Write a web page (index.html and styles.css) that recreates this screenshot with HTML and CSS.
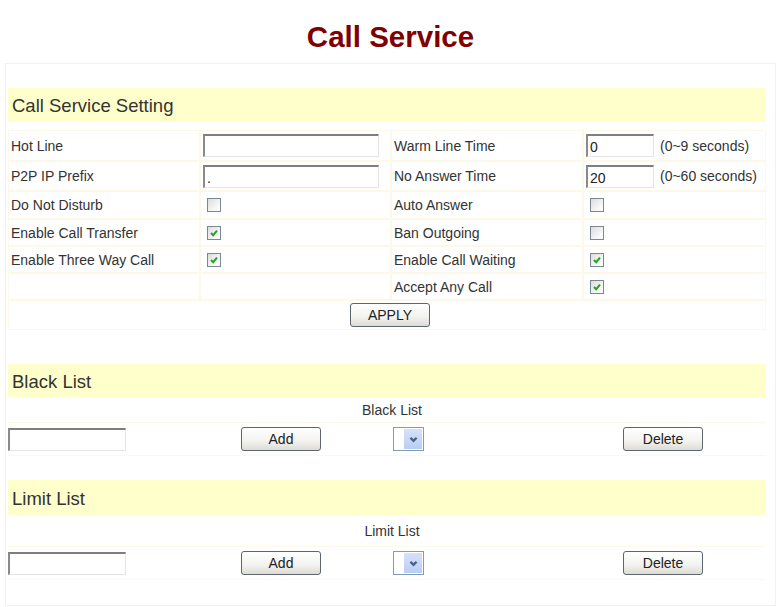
FILE: index.html
```html
<!DOCTYPE html>
<html lang="en">
<head>
  <meta charset="UTF-8" />
  <title>Call Service</title>
  <link rel="stylesheet" href="styles.css">
</head>
<body>

  <h1 class="page-title">Call Service</h1>

  <div class="panel">

    <div class="band">Call Service Setting</div>

    <div class="form-grid">
      <div class="cell row-1">Hot Line</div>
      <div class="cell row-1"><span class="textbox wide"></span></div>
      <div class="cell row-1">Warm Line Time</div>
      <div class="cell row-1"><span class="textbox short">0</span><span class="hint">(0~9 seconds)</span></div>

      <div class="cell row-2">P2P IP Prefix</div>
      <div class="cell row-2"><span class="textbox wide">.</span></div>
      <div class="cell row-2">No Answer Time</div>
      <div class="cell row-2"><span class="textbox short">20</span><span class="hint">(0~60 seconds)</span></div>

      <div class="cell row-3">Do Not Disturb</div>
      <div class="cell row-3"><span class="check"></span></div>
      <div class="cell row-3">Auto Answer</div>
      <div class="cell row-3"><span class="check"></span></div>

      <div class="cell row-4">Enable Call Transfer</div>
      <div class="cell row-4"><span class="check on"><svg viewBox="0 0 10 10"><polyline points="2,5 4.2,7.2 8,2.6" /></svg></span></div>
      <div class="cell row-4">Ban Outgoing</div>
      <div class="cell row-4"><span class="check"></span></div>

      <div class="cell row-5">Enable Three Way Call</div>
      <div class="cell row-5"><span class="check on"><svg viewBox="0 0 10 10"><polyline points="2,5 4.2,7.2 8,2.6" /></svg></span></div>
      <div class="cell row-5">Enable Call Waiting</div>
      <div class="cell row-5"><span class="check on"><svg viewBox="0 0 10 10"><polyline points="2,5 4.2,7.2 8,2.6" /></svg></span></div>

      <div class="cell row-6"></div>
      <div class="cell row-6"></div>
      <div class="cell row-6">Accept Any Call</div>
      <div class="cell row-6"><span class="check on"><svg viewBox="0 0 10 10"><polyline points="2,5 4.2,7.2 8,2.6" /></svg></span></div>

      <div class="cell apply-row"><span class="btn">APPLY</span></div>
    </div>

    <div class="band band-black">Black List</div>
    <div class="list-label black-label">Black List</div>
    <div class="list-row black-row">
      <span class="textbox list-input"></span>
      <span class="btn">Add</span>
      <span class="dropdown"><span class="dropdown-arrow"><svg viewBox="0 0 10 10"><polyline points="2.2,3.4 5,6.2 7.8,3.4" /></svg></span></span>
      <span class="btn">Delete</span>
    </div>

    <div class="band band-limit">Limit List</div>
    <div class="list-label limit-label">Limit List</div>
    <div class="list-row limit-row">
      <span class="textbox list-input"></span>
      <span class="btn">Add</span>
      <span class="dropdown"><span class="dropdown-arrow"><svg viewBox="0 0 10 10"><polyline points="2.2,3.4 5,6.2 7.8,3.4" /></svg></span></span>
      <span class="btn">Delete</span>
    </div>

  </div>

</body>
</html>
```

FILE: styles.css
```css
body {
  margin: 0;
  padding: 0;
  background-color: white;
  font-family: 'Liberation Sans', Arial, sans-serif;
  color: #333;
}

.page-title {
  margin: 20px 0 9px;
  height: 34px;
  line-height: 34px;
  text-align: center;
  font-size: 29.5px;
  font-weight: bold;
  color: #800000;
}

.panel {
  margin: 0 5px;
  padding: 24px 9px 25px 2px;
  border: 1px solid #f8f3d4;
}

.band {
  height: 34px;
  line-height: 36px;
  padding-left: 4px;
  background-color: #ffffcc;
  font-size: 18.5px;
  color: #333;
}

.band-black {
  margin-top: 34px;
  height: 33px;
  line-height: 35px;
}

.band-limit {
  margin-top: 24px;
  height: 35px;
  line-height: 37px;
}

.form-grid {
  margin-top: 8px;
  display: grid;
  grid-template-columns: 192px 191px 192px 1fr;
}

.cell {
  display: flex;
  align-items: center;
  padding-left: 2px;
  font-size: 14px;
  border: 1px solid #fcf9e8;
  box-sizing: border-box;
}

.row-1 { height: 31px; }
.row-2 { height: 30px; }
.row-3 { height: 28px; }
.row-4, .row-5, .row-6 { height: 27px; }

.apply-row {
  grid-column: 1 / -1;
  height: 30px;
  justify-content: center;
  padding-left: 6px;
}

.textbox {
  display: inline-block;
  box-sizing: border-box;
  height: 23px;
  padding: 3px 0 0 2px;
  background: white;
  border-style: solid;
  border-width: 2px 1px 1px 2px;
  border-color: #7e7e7e #e4e4e4 #e4e4e4 #8a8a8a;
  font-size: 14px;
  line-height: 16px;
  color: #222;
}

.wide { width: 176px; }
.short { width: 68px; }
.list-input { width: 118px; }

.hint {
  margin-left: 6px;
  font-size: 14px;
}

.check {
  display: inline-flex;
  align-items: center;
  justify-content: center;
  width: 14px;
  height: 14px;
  margin-left: 4px;
  box-sizing: border-box;
  border: 1px solid #7b8796;
  background: linear-gradient(135deg, #dcdcdc, #f8f8f8 70%, #ffffff);
}

.check svg {
  width: 10px;
  height: 10px;
  fill: none;
  stroke: #23a323;
  stroke-width: 2;
}

.btn {
  display: inline-flex;
  align-items: center;
  justify-content: center;
  box-sizing: border-box;
  width: 80px;
  height: 24px;
  border: 1px solid #5d6570;
  border-radius: 3px;
  background: linear-gradient(#ffffff, #f2f2ee 60%, #dedbd4);
  font-size: 14px;
  color: #222;
}

.list-label {
  display: flex;
  align-items: center;
  justify-content: center;
  padding-left: 10px;
  font-size: 14px;
  border-bottom: 1px solid #fcf9e8;
}

.black-label {
  margin-top: 1px;
  height: 24px;
}

.limit-label {
  height: 31px;
}

.list-row {
  display: grid;
  grid-template-columns: 233px 152px 230px 1fr;
  align-items: center;
  border-bottom: 1px solid #fcf9e8;
}

.black-row { height: 32px; }
.limit-row { height: 32px; }

.dropdown {
  display: inline-flex;
  justify-content: flex-end;
  box-sizing: border-box;
  width: 31px;
  height: 24px;
  padding: 1px;
  border: 1px solid #7f9db9;
  background: white;
}

.dropdown-arrow {
  display: flex;
  align-items: center;
  justify-content: center;
  width: 18px;
  background: linear-gradient(#d6e2fb, #b9cdf5);
}

.dropdown-arrow svg {
  width: 11px;
  height: 11px;
  fill: none;
  stroke: #4d6185;
  stroke-width: 2.2;
}
```
